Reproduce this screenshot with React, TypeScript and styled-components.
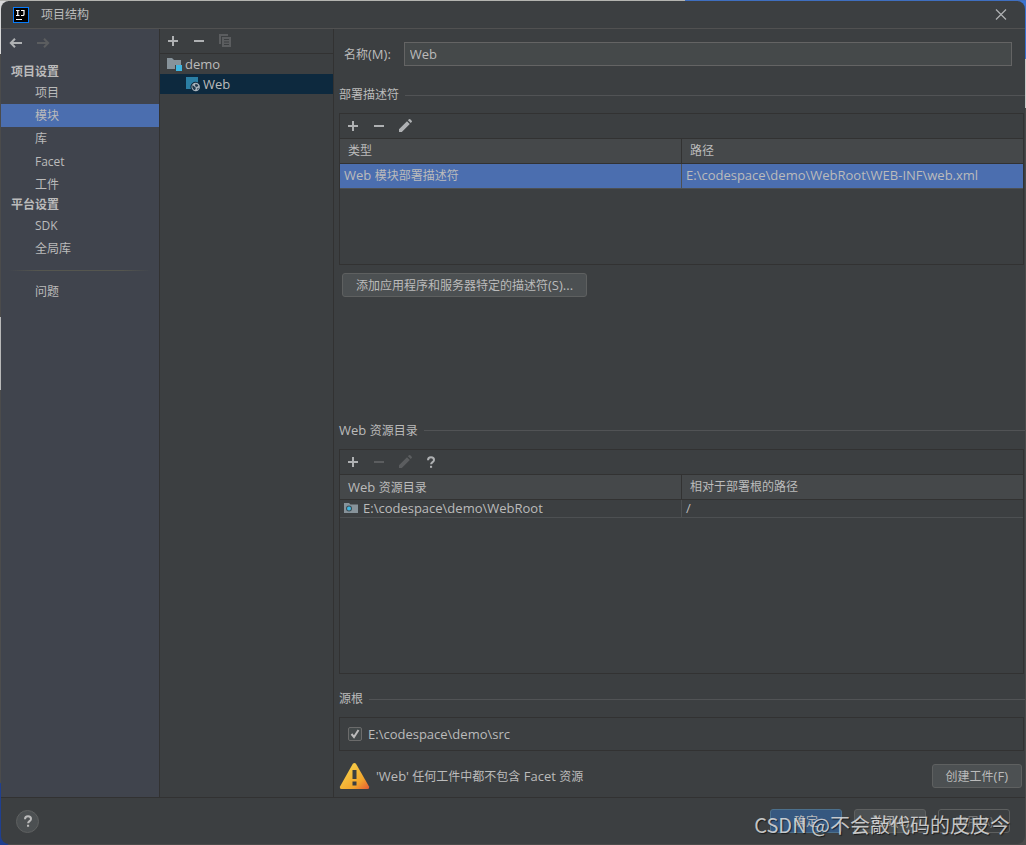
import React from "react";
import styled, { createGlobalStyle, css } from "styled-components";

const GlobalStyle = createGlobalStyle`
  *, *::before, *::after { box-sizing: border-box; }
  body {
    margin: 0;
    background:
      linear-gradient(to right, #b4b4b0 0 685px, #3f6fc0 685px) top / 100% 1px no-repeat,
      linear-gradient(#d8d8d8 0 54px, #4b4b4b 54px 317px, #b9b9b9 317px 390px, #4b4b4b 390px 783px, #1f3f8f 783px) left / 8px 100% no-repeat,
      linear-gradient(#3a73d0 0 59px, #c8c8c8 59px 108px, #4b4b4b 108px) right / 8px 100% no-repeat,
      #4b4b4b;
    color: #bbbbbb;
    font: 12px/16px "Open Sans", "Noto Sans CJK SC", sans-serif;
  }
  button, input { font: inherit; color: inherit; }
  h1, h2, p, ul { margin: 0; padding: 0; font: inherit; }
  ul { list-style: none; }
`;

const Window = styled.div`
  position: relative;
  display: flex;
  flex-direction: column;
  min-height: calc(100vh - 2px);
  margin: 1px;
  border-radius: 8px;
  overflow: hidden;
  background: #3c3f41;
`;

const TitleBar = styled.header`
  display: flex;
  align-items: center;
  gap: 12px;
  height: 28px;
  padding: 0 16px 0 12px;
  border-bottom: 1px solid #515151;
  h1 { flex: 1; }
`;

const Body = styled.div`
  flex: 1;
  display: grid;
  grid-template-columns: 159px 174px minmax(0, 1fr);
`;

const Sidebar = styled.nav`
  background: #40444d;
  border-right: 1px solid #323232;
`;

const IconButton = styled.button`
  display: flex;
  width: 16px;
  height: 16px;
  padding: 0;
  border: 0;
  background: none;
  color: #afb1b3;
  &:disabled { color: #5b5d5f; }
`;

const History = styled.div`
  display: flex;
  gap: 11px;
  padding: 6px 7px 12px;
`;

const GroupTitle = styled.h2`
  padding-left: 10px;
  && { font-weight: 700; line-height: 18px; }
`;

const NavLink = styled.a<{ $active?: boolean }>`
  display: block;
  padding-left: 34px;
  line-height: 23px;
  color: inherit;
  text-decoration: none;
  ${(p) => p.$active && css`background: #4b6eaf;`}
`;

const Divider = styled.hr`
  height: 1px;
  margin: 10px 8px 9px;
  border: 0;
  background: linear-gradient(to right, transparent, #55564f 20%, #55564f 80%, transparent);
`;

const TreePane = styled.section`
  border-right: 1px solid #323232;
`;

const Toolbar = styled.div`
  display: flex;
  align-items: center;
  gap: 10px;
  height: 25px;
  padding: 0 5px;
  border-bottom: 1px solid #323232;
`;

const TreeRow = styled.li<{ $level: number; $selected?: boolean }>`
  display: flex;
  align-items: center;
  gap: 3px;
  height: 20px;
  padding-left: ${(p) => 6 + p.$level * 18}px;
  background: ${(p) => (p.$selected ? "#0d293e" : "transparent")};
`;

const Latin = styled.span`
  font-size: 13px;
`;

const Main = styled.main`
  display: flex;
  flex-direction: column;
  padding: 13px 0 7px 5px;
`;

const NameRow = styled.label`
  display: flex;
  align-items: center;
  gap: 13px;
  padding: 0 13px 0 5px;
`;

const NameInput = styled.input`
  flex: 1;
  min-width: 0;
  height: 24px;
  padding: 0 5px;
  border: 1px solid #646464;
  background: #45494a;
  outline: 0;
  && { font-size: 13px; }
`;

const SectionTitle = styled.h2<{ $gap: number }>`
  display: flex;
  align-items: center;
  gap: 6px;
  margin-top: ${(p) => p.$gap}px;
  margin-bottom: 10px;
  &::after {
    content: "";
    flex: 1;
    height: 1px;
    background: #515355;
  }
`;

const Panel = styled.div<{ $height: number }>`
  min-height: ${(p) => p.$height}px;
  margin-right: 1px;
  border: 1px solid #323232;
`;

const Table = styled.table`
  width: 100%;
  table-layout: fixed;
  border-collapse: collapse;
  th, td { text-align: left; font-weight: 400; border-bottom: 1px solid #323232; }
  th { height: 24px; padding: 1px 8px 0; background: #45484a; }
  th + th { border-left: 1px solid #323232; }
`;

const DataRow = styled.tr<{ $selected?: boolean }>`
  height: ${(p) => (p.$selected ? 25 : 17)}px;
  background: ${(p) => (p.$selected ? "#4b6eaf" : "transparent")};
  && td {
    padding: 0 4px;
    line-height: 16px;
    border-bottom-color: #4d5052;
  }
  td + td { border-left: 1px solid #4d5052; }
`;

const FileCell = styled.span`
  display: flex;
  align-items: center;
  gap: 5px;
`;

const Button = styled.button<{ $primary?: boolean }>`
  height: 24px;
  min-width: 72px;
  padding: 1px 13px 0;
  border: 1px solid ${(p) => (p.$primary ? "#4c708c" : "#5e6060")};
  border-radius: 3px;
  background: ${(p) => (p.$primary ? "#365880" : "#4c5052")};
  white-space: nowrap;
  &:disabled { background: none; color: #777777; }
`;

const AddDescriptor = styled.div`
  padding: 8px 3px 0;
`;

const SourceRow = styled.label`
  display: flex;
  align-items: center;
  gap: 6px;
  height: 32px;
  padding: 0 8px;
`;

const Checkbox = styled.input`
  appearance: none;
  width: 14px;
  height: 14px;
  margin: 0;
  border: 1px solid #6b6b6b;
  border-radius: 2px;
  background: #43494a;
  &:not(:checked) + svg { display: none; }
`;

const CheckWrap = styled.span`
  position: relative;
  display: flex;
  svg { position: absolute; inset: 0; pointer-events: none; }
`;

const Warning = styled.div`
  display: flex;
  align-items: center;
  gap: 6px;
  margin-top: auto;
  padding-right: 3px;
  p { flex: 1; }
`;

const Footer = styled.footer`
  display: flex;
  align-items: center;
  gap: 12px;
  height: 47px;
  padding: 0 15px;
  border-top: 1px solid #323232;
`;

const HelpButton = styled.button`
  display: flex;
  align-items: center;
  justify-content: center;
  width: 23px;
  height: 23px;
  margin-right: auto;
  padding: 0;
  border: 1px solid #5e6060;
  border-radius: 50%;
  background: #4c5052;
`;

const Watermark = styled.div`
  position: absolute;
  right: 15px;
  bottom: 4px;
  font: 20px/30px "Noto Sans CJK SC", sans-serif;
  color: rgba(225, 225, 225, 0.85);
  text-shadow: 1px 1px 1px rgba(0, 0, 0, 0.6);
  white-space: nowrap;
  pointer-events: none;
`;

const Svg = ({ children, w = 16, h = 16 }: { children: React.ReactNode; w?: number; h?: number }) => (
  <svg width={w} height={h} viewBox={`0 0 ${w} ${h}`} fill="currentColor" aria-hidden="true">
    {children}
  </svg>
);

const PlusIcon = () => <Svg><path d="M7 3h2v4h4v2H9v4H7V9H3V7h4z" /></Svg>;
const MinusIcon = () => <Svg><path d="M3 7h10v2H3z" /></Svg>;
const PencilIcon = () => (
  <Svg>
    <path d="M2 11.2 10 3.2 12.8 6 4.8 14H2zM10.9 2.3l1-1a1 1 0 0 1 1.4 0l1.4 1.4a1 1 0 0 1 0 1.4l-1 1z" />
  </Svg>
);
const QuestionIcon = () => (
  <Svg>
    <path
      d="M5 6.2C5 4.2 6.2 3.2 8 3.2s3 1.1 3 2.7c0 2.2-2.9 2.2-2.9 4.4"
      fill="none"
      stroke="currentColor"
      strokeWidth="2"
    />
    <path d="M7 11.8h2.1v2H7z" />
  </Svg>
);
const ArrowIcon = ({ flip }: { flip?: boolean }) => (
  <Svg>
    <path
      transform={flip ? "matrix(-1 0 0 1 16 0)" : undefined}
      d="M14 8H3M7 3.8 2.8 8 7 12.2"
      fill="none"
      stroke="currentColor"
      strokeWidth="2"
    />
  </Svg>
);
const CopyIcon = () => (
  <Svg>
    <path d="M2 1h9v2H4v8H2z" />
    <path fillRule="evenodd" d="M5 4h9v10H5zM7 6v1h5V6zm0 2.500v1h5v-1zM7 11v1h5v-1z" />
  </Svg>
);
const CloseIcon = () => (
  <Svg><path d="m3 2.500 10 10m0-10-10 10" fill="none" stroke="currentColor" strokeWidth="1.200" /></Svg>
);
const AppIcon = () => (
  <Svg>
    <path fill="#087cfa" d="M0 0h16v16H0z" />
    <path fill="#000" d="M1 1h14v14H1z" />
    <path
      d="M3 3.500h3.500M4.750 3.500v5M3 8.500h3.500M8 3.500h3v3.700q0 1.300-1.300 1.300H8M3 12.500h6"
      fill="none"
      stroke="#fff"
      strokeWidth="1.200"
    />
  </Svg>
);
const ProjectFolderIcon = () => (
  <Svg>
    <path fill="#87939a" d="M1 2h5l2 2h7v5H9v4H1z" />
    <path fill="#40b6e0" d="M10 9h6v6h-6z" />
  </Svg>
);
const WebIcon = () => (
  <Svg>
    <path fill="#2b7fa4" d="M2 1h12v5.500A5 5 0 0 0 7 13H2z" />
    <circle cx="11.700" cy="11" r="4.200" fill="#a9b4bc" />
    <path
      fill="#20394c"
      d="M8.300 9.300c1.200.3 2 .8 2.300 1.700l1.300.8-.9 2.400c-1.500-.6-2.700-2-2.700-3.500zM11.500 7.700l2.800 1.300-.7 1.600-1.700.3-.9-1.500zM13.200 12.200l1.700-.5-1.300 2.500z"
    />
  </Svg>
);
const WebFolderIcon = () => (
  <Svg w={14}>
    <path fill="#87939a" d="M0 3h5l1.500 1.500H14V13H0z" />
    <circle cx="5" cy="8.500" r="3" fill="#3c4b53" />
    <circle cx="5" cy="8.500" r="2" fill="#40b6e0" />
  </Svg>
);
const WarningIcon = () => (
  <Svg w={31} h={28}>
    <defs>
      <linearGradient id="warn" x1="0" y1="0" x2="1" y2="1">
        <stop offset="0.300" stopColor="#f5c643" />
        <stop offset="0.700" stopColor="#f2a42c" />
        <stop offset="1" stopColor="#e55a35" />
      </linearGradient>
    </defs>
    <path
      fill="url(#warn)"
      d="M13.800 1.800q1.700-1.600 3.200 0L30 24.500q.6 2.500-1.500 2.500H2.500Q.4 27 1 24.500z"
    />
    <path fill="#3c3f41" d="M13.500 8h4v9h-4zM13.500 19.500h4v4h-4z" />
  </Svg>
);

const EditTools = ({ readOnly, help }: { readOnly?: boolean; help?: boolean }) => (
  <Toolbar>
    <IconButton aria-label="添加"><PlusIcon /></IconButton>
    <IconButton aria-label="移除" disabled={readOnly}><MinusIcon /></IconButton>
    <IconButton aria-label="编辑" disabled={readOnly}><PencilIcon /></IconButton>
    {help && <IconButton aria-label="帮助"><QuestionIcon /></IconButton>}
  </Toolbar>
);

const projectLinks = ["项目", "模块", "库", "Facet", "工件"];
const platformLinks = ["SDK", "全局库"];

const NavList = ({ items, active }: { items: string[]; active?: string }) => (
  <ul>
    {items.map((item) => (
      <li key={item}>
        <NavLink href="#" $active={item === active}>{item}</NavLink>
      </li>
    ))}
  </ul>
);

export default function App() {
  return (
    <>
      <GlobalStyle />
      <Window>
        <TitleBar>
          <AppIcon />
          <h1>项目结构</h1>
          <IconButton aria-label="关闭"><CloseIcon /></IconButton>
        </TitleBar>
        <Body>
          <Sidebar>
            <History>
              <IconButton aria-label="后退"><ArrowIcon /></IconButton>
              <IconButton aria-label="前进" disabled><ArrowIcon flip /></IconButton>
            </History>
            <GroupTitle>项目设置</GroupTitle>
            <NavList items={projectLinks} active="模块" />
            <GroupTitle>平台设置</GroupTitle>
            <NavList items={platformLinks} />
            <Divider />
            <NavList items={["问题"]} />
          </Sidebar>
          <TreePane>
            <Toolbar>
              <IconButton aria-label="添加"><PlusIcon /></IconButton>
              <IconButton aria-label="移除"><MinusIcon /></IconButton>
              <IconButton aria-label="复制" disabled><CopyIcon /></IconButton>
            </Toolbar>
            <ul>
              <TreeRow $level={0}><ProjectFolderIcon /><Latin>demo</Latin></TreeRow>
              <TreeRow $level={1} $selected><WebIcon /><Latin>Web</Latin></TreeRow>
            </ul>
          </TreePane>
          <Main>
            <NameRow>
              <span>名称<Latin>(M):</Latin></span>
              <NameInput defaultValue="Web" />
            </NameRow>
            <SectionTitle $gap={21}>部署描述符</SectionTitle>
            <Panel $height={152}>
              <EditTools />
              <Table>
                <thead>
                  <tr><th>类型</th><th>路径</th></tr>
                </thead>
                <tbody>
                  <DataRow $selected>
                    <td><Latin>Web </Latin>模块部署描述符</td>
                    <td><Latin>E:\codespace\demo\WebRoot\WEB-INF\web.xml</Latin></td>
                  </DataRow>
                </tbody>
              </Table>
            </Panel>
            <AddDescriptor>
              <Button>添加应用程序和服务器特定的描述符<Latin>(S)...</Latin></Button>
            </AddDescriptor>
            <SectionTitle $gap={125}><span><Latin>Web </Latin>资源目录</span></SectionTitle>
            <Panel $height={225}>
              <EditTools readOnly help />
              <Table>
                <thead>
                  <tr><th><Latin>Web </Latin>资源目录</th><th>相对于部署根的路径</th></tr>
                </thead>
                <tbody>
                  <DataRow>
                    <td><FileCell><WebFolderIcon /><Latin>E:\codespace\demo\WebRoot</Latin></FileCell></td>
                    <td><Latin>/</Latin></td>
                  </DataRow>
                </tbody>
              </Table>
            </Panel>
            <SectionTitle $gap={17}>源根</SectionTitle>
            <Panel $height={34}>
              <SourceRow>
                <CheckWrap>
                  <Checkbox type="checkbox" defaultChecked />
                  <Svg w={14} h={14}>
                    <path d="m3.500 7 2.500 3 4.500-7" fill="none" stroke="currentColor" strokeWidth="2" />
                  </Svg>
                </CheckWrap>
                <Latin>E:\codespace\demo\src</Latin>
              </SourceRow>
            </Panel>
            <Warning>
              <WarningIcon />
              <p><Latin>'Web' </Latin>任何工件中都不包含<Latin> Facet </Latin>资源</p>
              <Button>创建工件<Latin>(F)</Latin></Button>
            </Warning>
          </Main>
        </Body>
        <Footer>
          <HelpButton aria-label="帮助"><QuestionIcon /></HelpButton>
          <Button $primary>确定</Button>
          <Button>关闭(C)</Button>
          <Button disabled>应用(A)</Button>
        </Footer>
        <Watermark>CSDN @不会敲代码的皮皮今</Watermark>
      </Window>
    </>
  );
}
